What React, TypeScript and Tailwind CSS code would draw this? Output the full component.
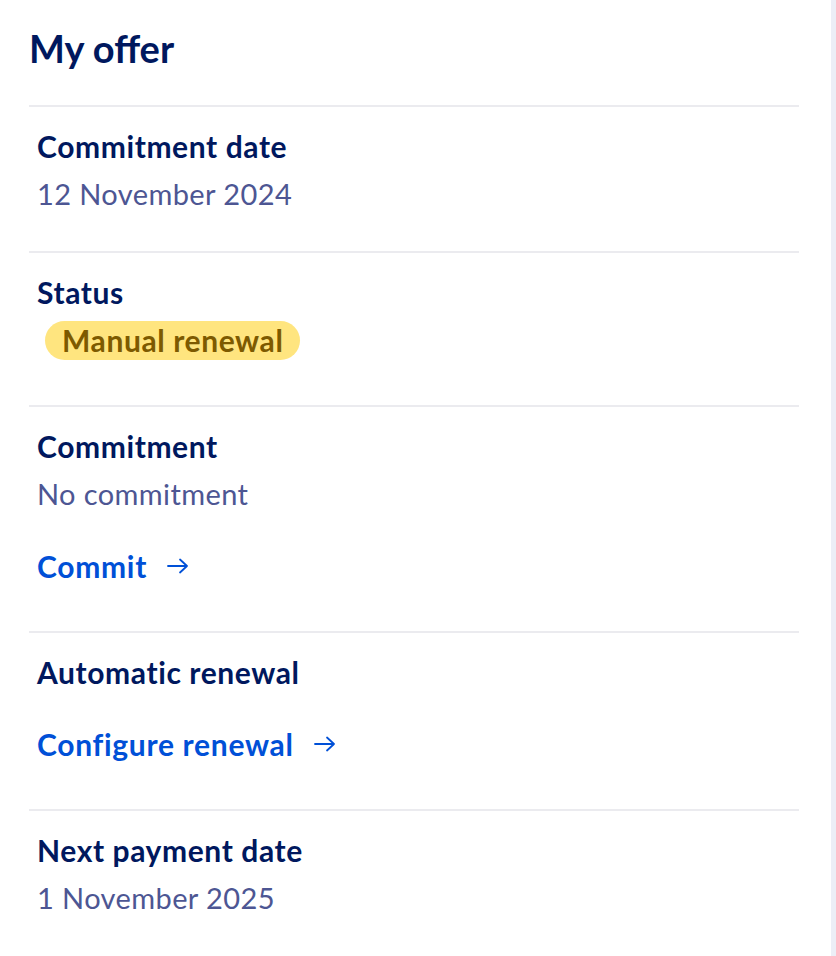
import { ReactNode } from "react";

function Arrow() {
  return (
    <svg width="22" height="16" viewBox="0 0 22 16" fill="none" className="ml-5">
      <path
        d="M1 8h19M13 1.5 20 8l-7 6.5"
        stroke="currentColor"
        strokeWidth="1.8"
        strokeLinecap="round"
        strokeLinejoin="round"
      />
    </svg>
  );
}

function Section({ children, last = false }: { children: ReactNode; last?: boolean }) {
  return (
    <div className={last ? "pl-2 pt-[15px]" : "pl-2 pt-[15px] border-b-2 border-[#ebebef]"}>
      {children}
    </div>
  );
}

function Label({ text }: { text: string }) {
  return (
    <div className="text-[30px] leading-[48px] font-bold tracking-[0.6px] text-[#00185e]">{text}</div>
  );
}

function Value({ text }: { text: string }) {
  return (
    <div className="text-[29px] leading-[48px] tracking-[0.4px] text-[#4d5693]">{text}</div>
  );
}

function Link({ text }: { text: string }) {
  return (
    <a className="flex items-center h-12 text-[30px] font-bold tracking-[0.7px] text-[#0050d7] cursor-pointer">
      {text}
      <Arrow />
    </a>
  );
}

export default function App() {
  return (
    <div className="flex min-h-[956px] bg-white" style={{ fontFamily: "Lato, sans-serif" }}>
      <div className="w-[831px] pl-[29px] pr-8">
        <h1 className="pt-5 h-[85px] text-[38px] leading-[56px] font-bold text-[#00185e] border-b-2 border-[#ebebef] box-content">
          My offer
        </h1>

        <Section>
          <Label text="Commitment date" />
          <Value text="12 November 2024" />
          <div className="h-[33px]" />
        </Section>

        <Section>
          <Label text="Status" />
          <div className="h-12 flex items-center">
            <span className="ml-2 inline-flex items-center h-[39px] px-[17px] rounded-full bg-[#ffe57f] text-[30px] font-bold tracking-[0.6px] text-[#7d5a00]">
              Manual renewal
            </span>
          </div>
          <div className="h-[41px]" />
        </Section>

        <Section>
          <Label text="Commitment" />
          <Value text="No commitment" />
          <div className="h-6" />
          <Link text="Commit" />
          <div className="h-[41px]" />
        </Section>

        <Section>
          <Label text="Automatic renewal" />
          <div className="h-6" />
          <Link text="Configure renewal" />
          <div className="h-[41px]" />
        </Section>

        <Section last>
          <Label text="Next payment date" />
          <Value text="1 November 2025" />
        </Section>
      </div>
      <div className="w-[5px] bg-[#eceef6]" />
    </div>
  );
}
